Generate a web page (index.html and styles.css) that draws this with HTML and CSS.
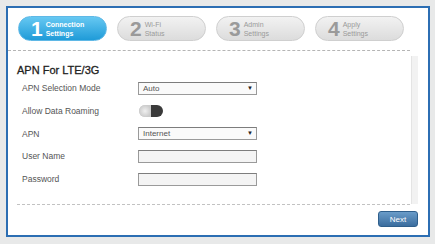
FILE: index.html
```html
<!DOCTYPE html>
<html lang="en">
<head>
    <meta charset="UTF-8">
    <meta name="viewport" content="width=device-width, initial-scale=1.0">
    <title>Setup Wizard</title>
    <link rel="stylesheet" href="styles.css">
</head>
<body>
    <div class="frame">
        <div class="steps">
            <div class="step active"><span class="num">1</span><span class="txt">Connection<br>Settings</span></div>
            <div class="step"><span class="num">2</span><span class="txt">Wi-Fi<br>Status</span></div>
            <div class="step"><span class="num">3</span><span class="txt">Admin<br>Settings</span></div>
            <div class="step"><span class="num">4</span><span class="txt">Apply<br>Settings</span></div>
        </div>
        <div class="content">
            <div class="form">
                <h2>APN For LTE/3G</h2>
                <div class="row">
                    <label>APN Selection Mode</label>
                    <div class="select">Auto<span class="arrow">▼</span></div>
                </div>
                <div class="row">
                    <label>Allow Data Roaming</label>
                    <div class="toggle"><span class="knob"></span></div>
                </div>
                <div class="row">
                    <label>APN</label>
                    <div class="select">Internet<span class="arrow">▼</span></div>
                </div>
                <div class="row">
                    <label>User Name</label>
                    <div class="input"></div>
                </div>
                <div class="row">
                    <label>Password</label>
                    <div class="input"></div>
                </div>
            </div>
            <div class="scrollbar"></div>
        </div>
        <div class="footer">
            <button class="next">Next</button>
        </div>
    </div>
</body>
</html>
```

FILE: styles.css
```css
body {
    margin: 0;
    padding: 6px 5px 7px 6px;
    background-color: #e8e9e9;
    font-family: "Liberation Sans", Arial, sans-serif;
}

.frame {
    width: 420px;
    height: 227px;
    background-color: #fff;
    border: 2px solid #2c6eb3;
    display: flex;
    flex-direction: column;
}

.steps {
    display: flex;
    gap: 10px;
    padding: 8px 0 6px 10px;
    margin-right: 18px;
    height: 28px;
    border-bottom: 1px dashed #b5b5b5;
}

.step {
    width: 89px;
    height: 25px;
    border-radius: 13px;
    border: 1px solid #cfcfcf;
    background: linear-gradient(#f2f2f2, #dcdcdc);
    display: flex;
    align-items: center;
    padding-left: 12px;
    box-sizing: border-box;
    color: #9a9a9a;
}

.step.active {
    border-color: #5fb8e6;
    background: linear-gradient(#66c8f2, #1f9bd8);
    color: #fff;
}

.num {
    font-size: 21px;
    font-weight: bold;
    margin-right: 3px;
}

.txt {
    font-size: 7px;
    line-height: 9px;
}

.step.active .txt {
    font-weight: bold;
}

.content {
    display: flex;
    margin-top: 5px;
    height: 148px;
    border-bottom: 1px dashed #c2c2c2;
    margin-right: 18px;
    margin-left: 9px;
}

.form {
    flex: 1;
}

.scrollbar {
    width: 6px;
    background-color: #f2f2f2;
    border-left: 1px solid #e4e4e4;
    margin-right: -8px;
}

h2 {
    margin: 8px 0 1px 0;
    font-size: 11px;
    font-weight: normal;
    color: #222;
    -webkit-text-stroke: 0.3px #222;
}

.row {
    display: flex;
    align-items: center;
    height: 22.7px;
    padding-left: 5px;
}

label {
    width: 116px;
    font-size: 8.5px;
    color: #555;
}

.select, .input {
    width: 113px;
    height: 11px;
    border: 1px solid #9a9a9a;
    border-top-color: #7d7d7d;
    background-color: #f4f4f4;
    font-size: 8px;
    color: #555;
    padding: 0 0 0 4px;
    line-height: 11px;
    position: relative;
}

.select {
    background-color: #fafafa;
}

.arrow {
    position: absolute;
    right: 3px;
    top: 0;
    font-size: 6px;
    color: #222;
}

.toggle {
    width: 24px;
    height: 12px;
    border-radius: 6px;
    background: linear-gradient(90deg, #ccc 50%, #3a3a3a 50%);
    margin-left: 1px;
    display: flex;
    align-items: center;
}

.knob {
    width: 12px;
    height: 12px;
    border-radius: 50%;
    background: radial-gradient(#f0f0f0, #bdbdbd);
}

.footer {
    display: flex;
    justify-content: flex-end;
    padding: 6px 10px 0 0;
}

.next {
    width: 40px;
    height: 16px;
    border: 1px solid #2f5f8c;
    border-radius: 3px;
    background: linear-gradient(#6a9cc9, #3b6d9e);
    color: #fff;
    font-family: "Liberation Sans", Arial, sans-serif;
    font-size: 8px;
    padding: 0;
}
```
